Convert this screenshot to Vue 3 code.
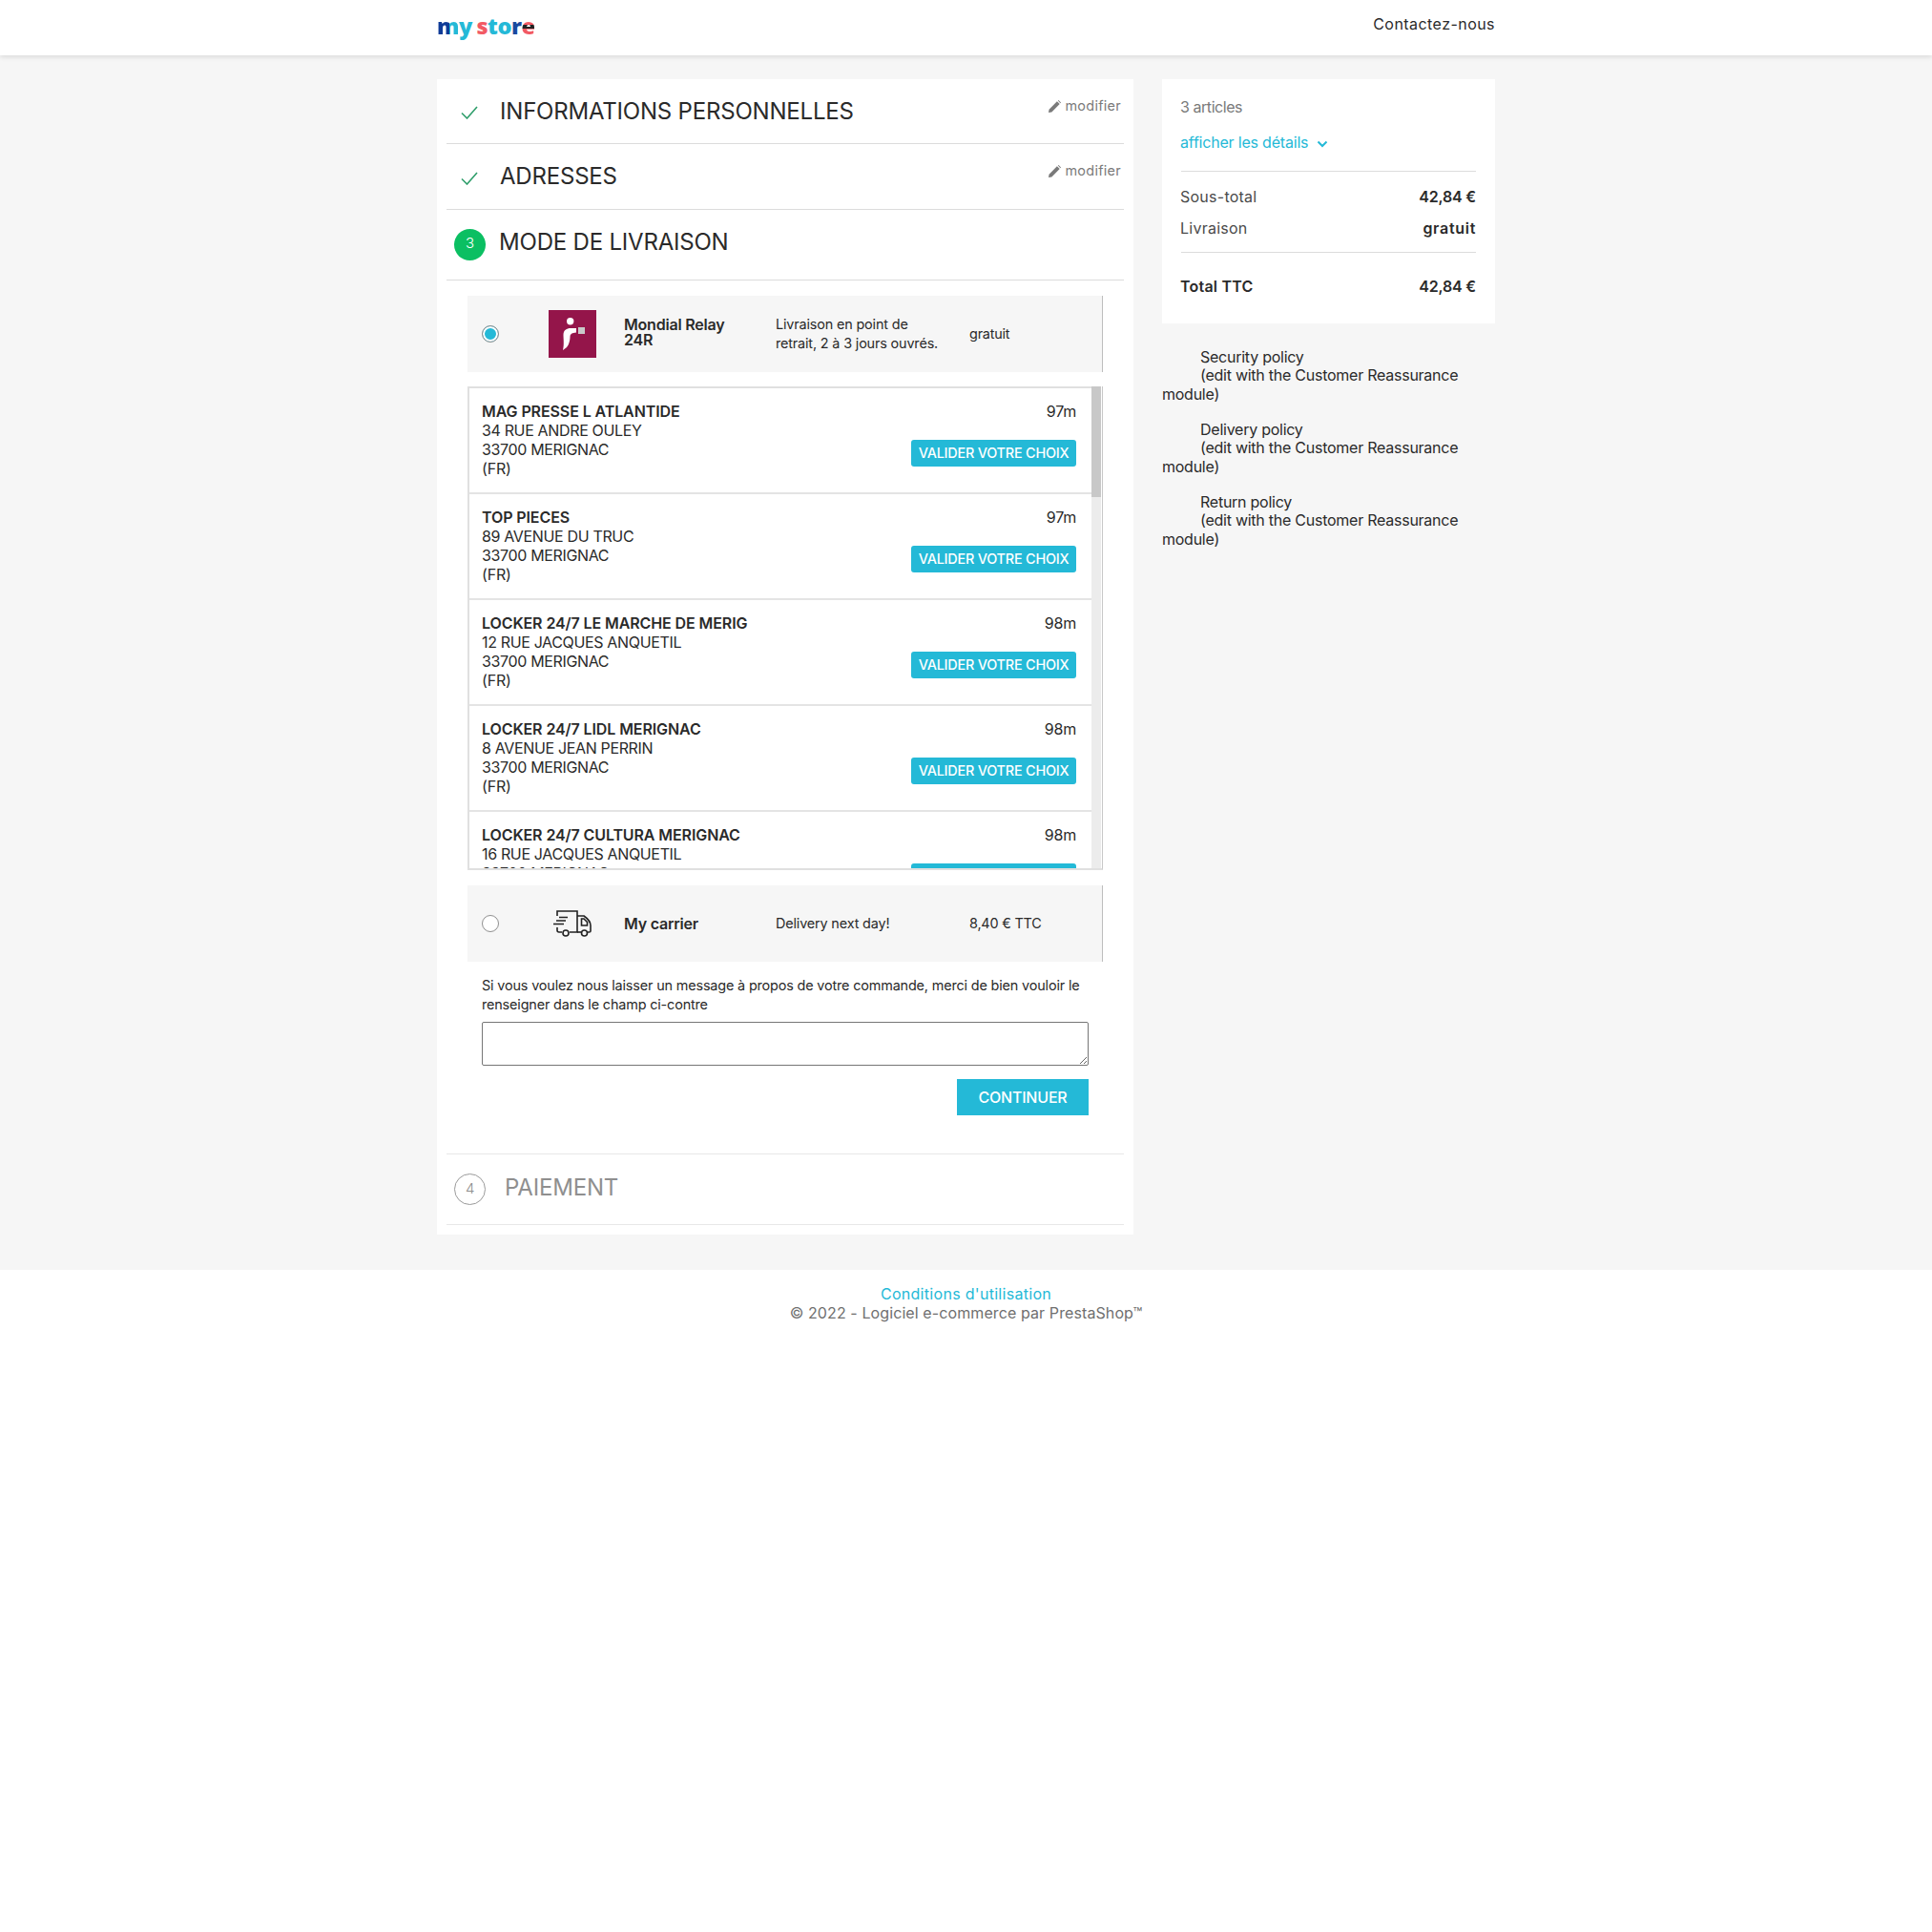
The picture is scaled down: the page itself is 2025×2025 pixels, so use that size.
<script setup>
const relays = [
  { name: 'MAG PRESSE L ATLANTIDE', street: '34 RUE ANDRE OULEY', dist: '97m' },
  { name: 'TOP PIECES', street: '89 AVENUE DU TRUC', dist: '97m' },
  { name: 'LOCKER 24/7 LE MARCHE DE MERIG', street: '12 RUE JACQUES ANQUETIL', dist: '98m' },
  { name: 'LOCKER 24/7 LIDL MERIGNAC', street: '8 AVENUE JEAN PERRIN', dist: '98m' },
  { name: 'LOCKER 24/7 CULTURA MERIGNAC', street: '16 RUE JACQUES ANQUETIL', dist: '98m' }
]

const policies = ['Security policy', 'Delivery policy', 'Return policy']
</script>

<template>
  <div class="page">
    <header class="top">
      <div class="wrap top-inner">
        <div class="logo"><span class="l-m">m</span><span class="l-y">y</span> <span class="l-s">s</span><span class="l-y">to</span><span class="l-r">r</span><span class="l-e">e</span></div>
        <a class="contact">Contactez-nous</a>
      </div>
    </header>

    <main class="content">
      <div class="wrap columns">
        <section class="steps">
          <div class="step step-done">
            <svg class="check" viewBox="0 0 18 14"><path d="M1 7.5 L6.5 13 L17 1" /></svg>
            <h1>INFORMATIONS PERSONNELLES</h1>
            <a class="edit">
              <svg viewBox="0 0 14 14"><path d="M0 14 L0.6 10.4 L9.6 1.4 L12.6 4.4 L3.6 13.4 Z M10.6 0.6 L11.4 0 L14 2.6 L13.4 3.4 Z" /></svg>
              modifier
            </a>
          </div>
          <div class="step step-done step-two">
            <svg class="check" viewBox="0 0 18 14"><path d="M1 7.5 L6.5 13 L17 1" /></svg>
            <h1>ADRESSES</h1>
            <a class="edit">
              <svg viewBox="0 0 14 14"><path d="M0 14 L0.6 10.4 L9.6 1.4 L12.6 4.4 L3.6 13.4 Z M10.6 0.6 L11.4 0 L14 2.6 L13.4 3.4 Z" /></svg>
              modifier
            </a>
          </div>
          <div class="step step-current">
            <span class="badge">3</span>
            <h1>MODE DE LIVRAISON</h1>
          </div>

          <div class="delivery">
            <div class="carrier">
              <input type="radio" name="carrier" checked>
              <svg class="mr-logo" viewBox="0 0 50 50">
                <rect width="50" height="50" fill="#94154a" />
                <circle cx="22.700" cy="11.700" r="3.700" fill="#fff" />
                <path d="M15 42 C16.500 36 15.500 30 15.500 26 C15.500 21 19 19 23 19 L29 19 L29 23.500 L26 24 C23.500 24.500 22.500 26 22.500 28 C22.500 32 21 37 19 39 Z" fill="#fff" />
                <rect x="31" y="18" width="7" height="7" fill="#c9c9c9" />
              </svg>
              <strong class="c-name">Mondial Relay 24R</strong>
              <span class="c-desc">Livraison en point de retrait, 2 à 3 jours ouvrés.</span>
              <span class="c-price">gratuit</span>
            </div>

            <div class="relay-box">
              <div class="relay-list">
                <div v-for="r in relays" :key="r.name" class="relay">
                  <div class="relay-info">
                    <strong>{{ r.name }}</strong><br>
                    <span class="street">{{ r.street }}</span><br>
                    <span class="street">33700 MERIGNAC</span><br>
                    (FR)
                  </div>
                  <div class="relay-side">
                    <span>{{ r.dist }}</span>
                    <button>VALIDER VOTRE CHOIX</button>
                  </div>
                </div>
              </div>
              <div class="scroll-track"><div class="scroll-thumb"></div></div>
            </div>

            <div class="carrier">
              <input type="radio" name="carrier">
              <svg class="truck" viewBox="0 0 40 28" fill="none" stroke="#222" stroke-width="1.6">
                <path d="M4 6 V1 H25 V23 H17" />
                <path d="M25 6 H32 Q39 11 39 16 V22 Q39 23 37.5 23 H36" />
                <path d="M29.5 9 H32 L35.5 12.5 V16 H29.5 Z" />
                <path d="M25 23 H29" />
                <circle cx="13" cy="24" r="3" />
                <circle cx="32.500" cy="24" r="3" />
                <path d="M6 7.500 H15 M3 11 H13 M0 14.500 H11 M4 18 V21 Q4 23 6 23 H9" />
              </svg>
              <strong class="c-name">My carrier</strong>
              <span class="c-desc">Delivery next day!</span>
              <span class="c-price">8,40 € TTC</span>
            </div>

            <form class="order-form" @submit.prevent>
              <label>Si vous voulez nous laisser un message à propos de votre commande, merci de bien vouloir le renseigner dans le champ ci-contre</label>
              <textarea></textarea>
              <button class="continue">CONTINUER</button>
            </form>
          </div>

          <div class="step step-todo">
            <span class="badge badge-todo">4</span>
            <h1>PAIEMENT</h1>
          </div>
        </section>

        <aside class="side">
          <div class="cart">
            <p class="count">3 articles</p>
            <a class="details">
              afficher les détails
              <svg viewBox="0 0 12 8"><path d="M1.500 1.500 L6 6 L10.500 1.500" /></svg>
            </a>
            <hr>
            <div class="line"><span>Sous-total</span><b>42,84 €</b></div>
            <div class="line"><span>Livraison</span><b class="free">gratuit</b></div>
            <hr class="hr-total">
            <div class="line total"><b>Total TTC</b><b>42,84 €</b></div>
          </div>
          <div class="policies">
            <p v-for="p in policies" :key="p">
              <span class="p-icon"></span>{{ p }}<br>
              <span class="p-icon"></span>(edit with the Customer Reassurance module)
            </p>
          </div>
        </aside>
      </div>
    </main>

    <footer class="foot">
      <a>Conditions d'utilisation</a>
      <p>© 2022 - Logiciel e-commerce par PrestaShop™</p>
    </footer>
  </div>
</template>

<style>
body {
  background: #fff;
}
</style>

<style scoped>
.page {
  font-family: Inter, "Noto Sans", sans-serif;
  font-size: 16px;
  color: #2a2a2a;
  letter-spacing: -0.2px;
}

.wrap {
  width: 1109px;
  margin: 0 auto;
}

.top {
  height: 58px;
  background: #fff;
  box-shadow: 0 2px 5px rgba(0, 0, 0, 0.11);
  position: relative;
}

.top-inner {
  display: flex;
  justify-content: space-between;
  align-items: flex-start;
}

.logo {
  margin-top: 9px;
  font-family: "Open Sans", sans-serif;
  font-size: 23.5px;
  line-height: 36px;
  font-weight: 800;
  letter-spacing: -0.5px;
  word-spacing: -1px;
  color: #24b9d7;
}

.l-m {
  background: linear-gradient(90deg, #0f3b97 0 55%, #24b9d7 55% 100%);
  background-clip: text;
  color: transparent;
}

.l-y {
  color: #24b9d7;
}

.l-s {
  color: #f25a64;
}

.l-r {
  color: #1b4aa0;
}

.l-e {
  background: linear-gradient(180deg, #f25a64 0 48%, #222 48% 60%, #f25a64 60% 100%);
  background-clip: text;
  color: transparent;
}

.contact {
  margin-top: 15px;
  line-height: 20px;
  letter-spacing: 0.45px;
}

.content {
  background: #f6f6f6;
  padding: 25px 0 37px;
}

.columns {
  display: flex;
  align-items: flex-start;
  gap: 30px;
}

.steps {
  width: 730px;
  background: #fff;
  padding: 0 10px 10px;
  box-sizing: border-box;
}

.step {
  display: flex;
  align-items: center;
  border-bottom: 1px solid #dcdcdc;
  position: relative;
}

.step h1 {
  margin: 0;
  font-size: 24px;
  line-height: 32px;
  font-weight: 400;
  color: #2a2a2a;
}

.step-done {
  height: 68px;
  box-sizing: border-box;
}

.step-two {
  height: 69px;
}

.step-done h1 {
  margin-left: 23px;
}

.check {
  width: 18px;
  height: 14px;
  margin: 3px 0 0 15px;
  fill: none;
  stroke: #2f9e6b;
  stroke-width: 1.6;
}

.edit {
  position: absolute;
  right: 3px;
  top: 18px;
  display: flex;
  align-items: center;
  gap: 4px;
  font-size: 14.4px;
  line-height: 20px;
  letter-spacing: 0.3px;
  color: #7a7a7a;
}

.edit svg {
  width: 13px;
  height: 13px;
  fill: #7a7a7a;
}

.step-current {
  height: 73px;
}

.step-current h1 {
  margin: -5px 0 0 14px;
}

.badge {
  flex: none;
  width: 33px;
  height: 33px;
  margin-left: 8px;
  border-radius: 50%;
  background: #0bbf62;
  color: #fff;
  font-size: 15px;
  font-weight: 300;
  line-height: 30px;
  text-align: center;
}

.delivery {
  padding: 16px 22px 40px;
  border-bottom: 1px solid #e8e8e8;
  display: flex;
  flex-direction: column;
}

.carrier {
  height: 80px;
  background: #f6f6f6;
  border-right: 1px solid #bdbdbd;
  display: grid;
  grid-template-columns: 70px 79px 159px 203px 1fr;
  align-items: center;
  padding-left: 15px;
  box-sizing: border-box;
  font-size: 14.4px;
  line-height: 20px;
}

.carrier input {
  appearance: none;
  width: 18px;
  height: 18px;
  margin: 0;
  border: 1px solid #8f8f8f;
  border-radius: 50%;
  background: #fff;
}

.carrier input:checked {
  background: #24b9d7;
  box-shadow: inset 0 0 0 2px #fff;
}

.mr-logo {
  width: 50px;
  height: 50px;
}

.truck {
  width: 40px;
  height: 28px;
  margin-left: 5px;
}

.c-name {
  font-size: 16px;
  line-height: 16px;
  font-weight: 600;
  width: 120px;
  margin-top: -4px;
}

.carrier:last-of-type .c-name {
  margin-top: 0;
}

.c-desc {
  width: 175px;
  letter-spacing: -0.15px;
}

.relay-box {
  height: 507px;
  margin: 15px 0 16px;
  display: flex;
  border: solid #e0e0e0;
  border-width: 0 1px 2px 2px;
  border-right-color: #c8c8c8;
  padding-right: 1px;
  box-sizing: border-box;
}

.relay-list {
  flex: 1;
  min-width: 0;
  overflow: hidden;
  border-top: 2px solid #e0e0e0;
}

.scroll-track {
  flex: none;
  width: 10px;
  background: #ececec;
}

.scroll-thumb {
  height: 116px;
  background: #c8c8c8;
}

.relay {
  height: 111px;
  padding: 14px 16px 0 13px;
  box-sizing: border-box;
  border-bottom: 2px solid #e4e4e4;
  display: flex;
  justify-content: space-between;
  line-height: 20px;
}

.relay-info strong {
  font-weight: 600;
  letter-spacing: -0.1px;
}

.street {
  letter-spacing: -0.35px;
}

.relay-side {
  display: flex;
  flex-direction: column;
  align-items: flex-end;
  justify-content: space-between;
  height: 68px;
}

.relay-side button {
  width: 173px;
  height: 28px;
  border: 0;
  padding: 0 0 1px;
  border-radius: 3px;
  background: #24b9d7;
  color: #fff;
  font: 500 14.4px Inter, sans-serif;
  letter-spacing: -0.2px;
}

.order-form {
  padding: 15px 15px 0;
  display: flex;
  flex-direction: column;
  font-size: 14.4px;
  line-height: 20px;
  letter-spacing: -0.15px;
}

.order-form textarea {
  height: 46px;
  margin-top: 8px;
  border: 1px solid #767676;
  border-radius: 2px;
  box-sizing: border-box;
}

.continue {
  align-self: flex-end;
  width: 138px;
  height: 38px;
  margin-top: 14px;
  border: 0;
  padding: 0;
  background: #24b9d7;
  color: #fff;
  font: 500 16px Inter, sans-serif;
  letter-spacing: -0.2px;
}

.step-todo {
  height: 73px;
  border-bottom-color: #e8e8e8;
}

.step-todo h1 {
  margin: -4px 0 0 20px;
  color: #8f8f8f;
}

.badge-todo {
  background: #fff;
  border: 1px solid #9a9a9a;
  box-sizing: border-box;
  color: #8f8f8f;
}

.side {
  width: 349px;
}

.cart {
  height: 256px;
  background: #fff;
  padding: 19px 20px 0;
  box-sizing: border-box;
}

.count {
  margin: 0 0 0 -1px;
  font-size: 16px;
  line-height: 20px;
  letter-spacing: -0.45px;
  color: #7a7a7a;
}

.details {
  display: flex;
  align-items: center;
  gap: 9px;
  margin: 17px 0 0 -1px;
  font-size: 16px;
  line-height: 20px;
  letter-spacing: -0.2px;
  color: #24b9d7;
}

.details svg {
  width: 12px;
  height: 8px;
  margin-top: 3px;
  fill: none;
  stroke: #24b9d7;
  stroke-width: 2;
}

.cart hr {
  margin: 20px 0 16px;
  border: 0;
  border-top: 1px solid #dcdcdc;
}

.cart .hr-total {
  margin: 15px 0 16px;
}

.line {
  display: flex;
  justify-content: space-between;
  line-height: 20px;
  margin-bottom: 13px;
  margin-left: -1px;
  letter-spacing: 0.25px;
  color: #4a4a4a;
}

.line b {
  font-weight: 600;
  letter-spacing: -0.2px;
  color: #2a2a2a;
}

.line .free {
  letter-spacing: 0.7px;
}

.line.total b:first-child {
  letter-spacing: 0.2px;
}

.cart hr + .line.total {
  margin-top: 25px;
}

.policies {
  margin-top: 25.500px;
  line-height: 19.500px;
  letter-spacing: -0.25px;
}

.policies p {
  margin: 0 0 17.500px;
}

.p-icon {
  display: inline-block;
  width: 40px;
}

.foot {
  background: #fff;
  padding: 15px 0;
  text-align: center;
  line-height: 20px;
}

.foot a {
  color: #24b9d7;
  letter-spacing: 0.3px;
}

.foot p {
  margin: 0;
  color: #6f6f6f;
  letter-spacing: 0.1px;
}
</style>
